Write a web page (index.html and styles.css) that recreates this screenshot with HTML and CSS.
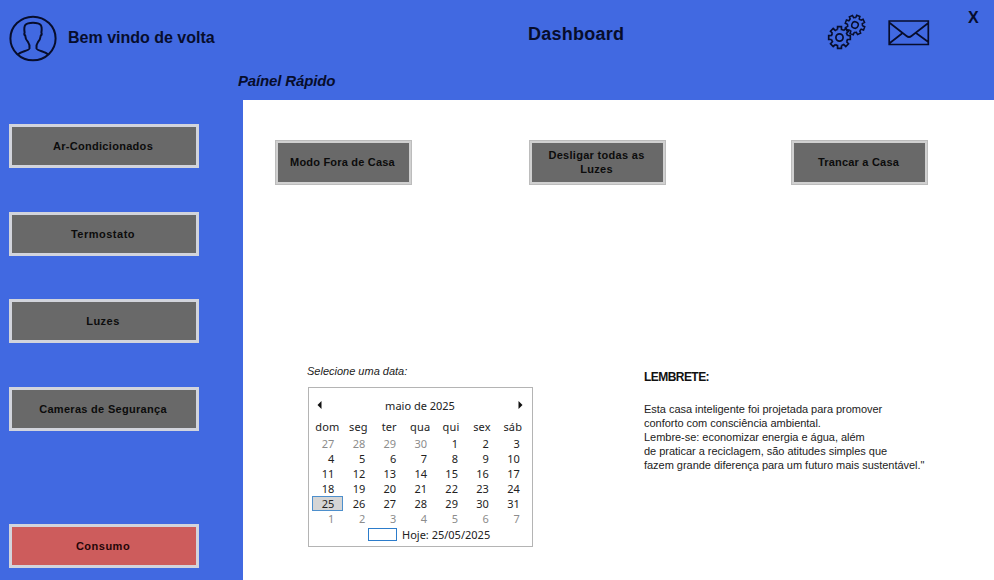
FILE: index.html
```html
<!DOCTYPE html>
<html lang="pt-BR">
<head>
<meta charset="utf-8">
<title>Dashboard</title>
<link rel="stylesheet" href="styles.css">
</head>
<body>
<div class="window">
  <header class="header">
    <svg class="avatar" viewBox="0 0 48 48" width="48" height="48">
      <ellipse cx="24" cy="23.500" rx="22.600" ry="21.800"/>
      <path d="M9 39.500C11.500 36.500 19.500 36 20.500 33.500Q21.200 30 19 27C17 25 16.300 23 16.200 20.500Q14.800 19.500 15.600 17.500C14.500 10.500 16 7.700 24 7.700S33.500 10.500 32.400 17.500Q33.200 19.500 31.800 20.500C31.500 23 31 25 29 27Q26.800 30 27.500 33.500C28.500 36 36.500 36.500 39 39.500"/>
    </svg>
    <span class="welcome">Bem vindo de volta</span>
    <h1 class="title">Dashboard</h1>
    <svg class="gears" viewBox="0 0 40 36" width="40" height="36">
      <defs>
        <path id="tooth" d="M8-2L10.800-1.900V1.900L8 2A8.300 8.300 0 0 1 7 4.300"/>
        <g id="gear">
          <use href="#tooth"/><use href="#tooth" transform="rotate(45)"/><use href="#tooth" transform="rotate(90)"/><use href="#tooth" transform="rotate(135)"/><use href="#tooth" transform="rotate(180)"/><use href="#tooth" transform="rotate(225)"/><use href="#tooth" transform="rotate(270)"/><use href="#tooth" transform="rotate(315)"/>
          <circle r="3.600"/>
        </g>
      </defs>
      <use href="#gear" transform="translate(12.500 23.500)"/>
      <use href="#gear" transform="translate(28 11) scale(.9) rotate(20)"/>
    </svg>
    <svg class="mail" viewBox="0 0 42 28" width="42" height="28">
      <path d="M1.200 2H40.300V25.500H1.200ZM1.200 3.500L18.500 17Q21 19 23.500 17L40.300 4M1.200 24.500L14 14.500M40.300 23L28 14"/>
    </svg>
    <span class="close">X</span>
    <h2 class="subtitle">Paínel Rápido</h2>
  </header>

  <nav class="sidebar">
    <button class="btn">Ar-Condicionados</button>
    <button class="btn short">Termostato</button>
    <button class="btn short">Luzes</button>
    <button class="btn">Cameras de Segurança</button>
    <button class="btn short btn-red">Consumo</button>
  </nav>

  <main class="content">
    <div class="actions">
      <button class="btn">Modo Fora de Casa</button>
      <button class="btn">Desligar todas as<br>Luzes</button>
      <button class="btn">Trancar a Casa</button>
    </div>
    <div class="lower">
      <section class="date">
        <p class="date-label">Selecione uma data:</p>
        <div class="calendar">
          <div class="month">
            <svg width="5" height="8" viewBox="0 0 5 8"><path d="M4.500 0V8L.500 4Z"/></svg>
            <span>maio de 2025</span>
            <svg width="5" height="8" viewBox="0 0 5 8"><path d="M.500 0V8L4.500 4Z"/></svg>
          </div>
          <div class="week names"><span>dom</span><span>seg</span><span>ter</span><span>qua</span><span>qui</span><span>sex</span><span>sáb</span></div>
          <div class="week"><i>27</i><i>28</i><i>29</i><i>30</i><b>1</b><b>2</b><b>3</b></div>
          <div class="week"><b>4</b><b>5</b><b>6</b><b>7</b><b>8</b><b>9</b><b>10</b></div>
          <div class="week"><b>11</b><b>12</b><b>13</b><b>14</b><b>15</b><b>16</b><b>17</b></div>
          <div class="week"><b>18</b><b>19</b><b>20</b><b>21</b><b>22</b><b>23</b><b>24</b></div>
          <div class="week"><b class="selected">25</b><b>26</b><b>27</b><b>28</b><b>29</b><b>30</b><b>31</b></div>
          <div class="week"><i>1</i><i>2</i><i>3</i><i>4</i><i>5</i><i>6</i><i>7</i></div>
          <div class="today"><span class="today-box"></span><span>Hoje: 25/05/2025</span></div>
        </div>
      </section>
      <section class="reminder">
        <h3>LEMBRETE:</h3>
        <p>Esta casa inteligente foi projetada para promover<br>conforto com consciência ambiental.<br>Lembre-se: economizar energia e água, além<br>de praticar a reciclagem, são atitudes simples que<br>fazem grande diferença para um futuro mais sustentável."</p>
      </section>
    </div>
  </main>
</div>
</body>
</html>
```
FILE: styles.css
```css
* { box-sizing: border-box; margin: 0; padding: 0; }
body { font-family: "Liberation Sans", Arial, sans-serif; color: #080a12; overflow: hidden; }
.window {
  width: 994px; height: 580px; background: #4169e1;
  display: grid; grid-template: 100px 480px / 243px 751px;
}
.header {
  grid-column: 1 / 3;
  display: grid; grid-template: 68px 32px / 68px 460px 300px 60px 80px 26px;
  color: #070d2c;
}
.header svg { fill: none; stroke: #070d2c; }
.avatar { margin: 15px 0 0 9px; stroke-width: 2; }
.welcome { font-size: 16px; font-weight: bold; line-height: 20px; margin-top: 28px; white-space: nowrap; }
.title { font-size: 18px; line-height: 22px; margin-top: 23px; letter-spacing: .25px; }
.gears { margin: 14px 0 0 -1px; stroke-width: 1.7; }
.mail { margin-top: 19px; stroke-width: 1.7; }
.close { font-size: 16px; font-weight: bold; line-height: 18px; margin-top: 9px; }
.subtitle { grid-column: 1 / 7; font-size: 15px; font-style: italic; line-height: 18px; letter-spacing: -.15px; margin: 4px 0 0 238px; }
.sidebar { padding: 24px 0 0 9px; display: flex; flex-direction: column; gap: 43.5px; }
.btn {
  width: 190px; height: 44px; flex: none; padding-right: 2px;
  border: 3px solid #d2d4dc; background: #696969; color: #0c0c0c;
  font: bold 11px/14px "Liberation Sans", Arial, sans-serif; letter-spacing: .3px;
}
.btn.short { letter-spacing: .5px; }
.btn-red { background: #cd5c5c; color: #250608; margin-top: 49.500px; }
.content { background: #fff; padding: 40px 0 0 32px; }
.actions { display: flex; }
.actions .btn { width: 137px; height: 45px; margin-right: 117px; padding-bottom: 1px; letter-spacing: .2px; border-color: #d0d0d0; outline: 1px solid #bcbcbc; outline-offset: -1px; }
.actions .btn:nth-child(2) { margin-right: 125px; letter-spacing: .3px; }
.actions .btn:last-child { margin-right: 0; }
.lower { display: flex; padding-top: 178px; }
.date { width: 369px; padding-left: 32px; }
.date-label { font-size: 11px; font-style: italic; line-height: 16px; color: #222; }
.calendar {
  width: 225px; height: 160px; margin: 8px 0 0 1px; border: 1px solid #b4b4b4; padding: 9px 4px 0 3px;
  font: 11px/15px "Noto Sans", "Open Sans", sans-serif; color: #222;
}
.month { display: flex; align-items: center; justify-content: space-between; padding: 0 5px 0 5px; height: 16px; }
.month svg { fill: #111; }
.week { display: grid; grid-template-columns: repeat(7, 30.900px); height: 15px; text-align: right; }
.names { text-align: center; margin-top: 6px; height: 17px; letter-spacing: .15px; }
.week b, .week i { font-weight: normal; font-style: normal; padding-right: 8.5px; }
.week i { color: #8c8c8c; }
.week .selected { background: #d5d5d5; outline: 1px solid #4d8fcc; outline-offset: -1px; }
.today { display: flex; align-items: center; height: 16px; padding-left: 56px; gap: 5px; }
.today-box { width: 29px; height: 13px; border: 1px solid #2c7ccb; }
.reminder { padding-top: 6px; white-space: nowrap; }
.reminder h3 { font-size: 12px; line-height: 16px; letter-spacing: -.55px; color: #111; }
.reminder p { font-size: 11px; line-height: 14px; letter-spacing: -.03px; margin-top: 17px; color: #222; }
```
